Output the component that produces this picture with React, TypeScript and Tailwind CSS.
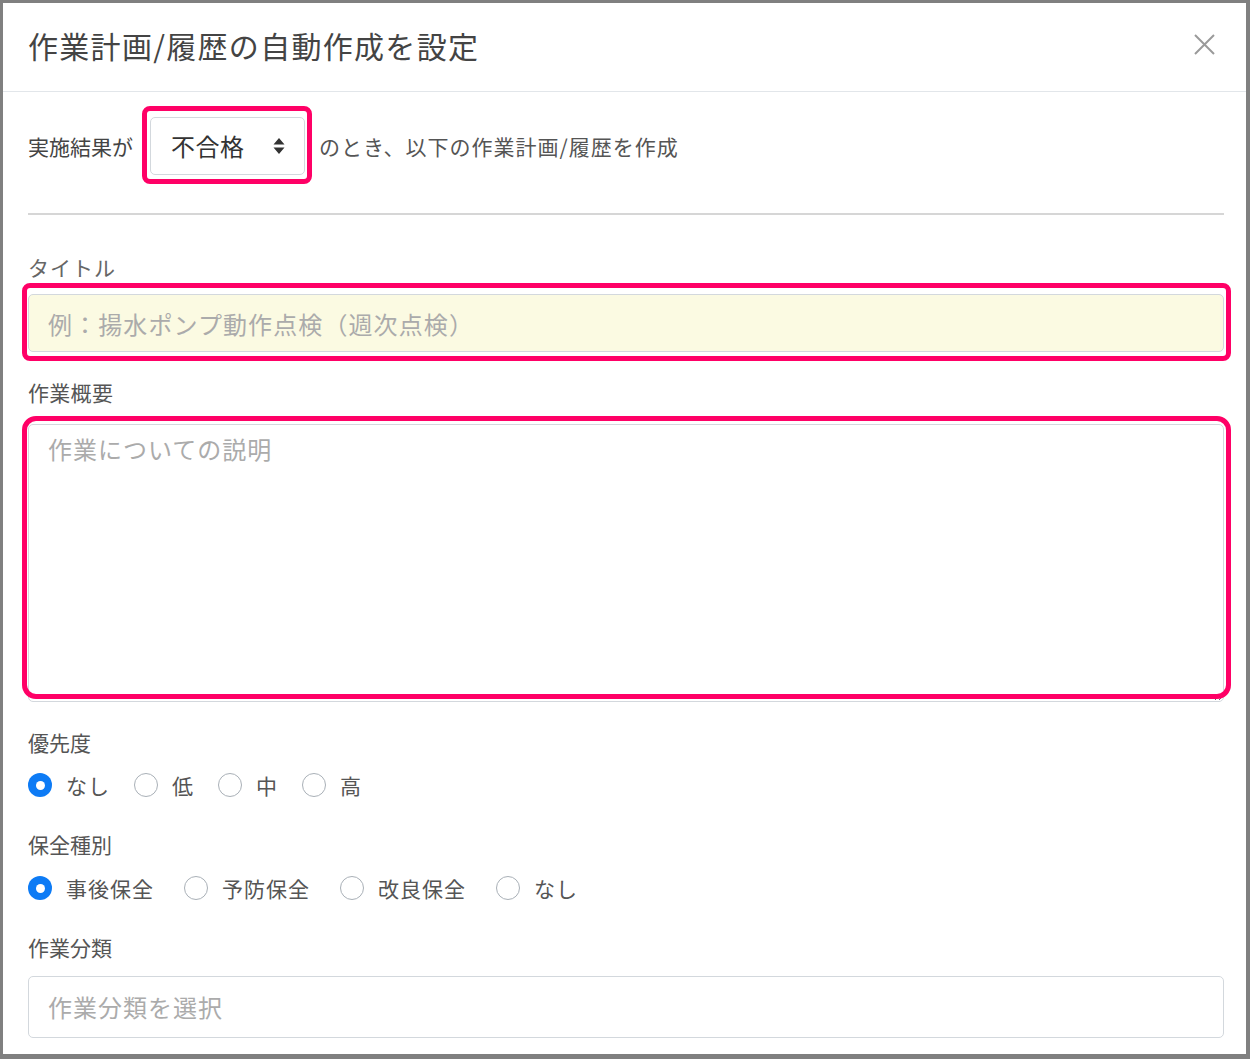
import React from "react";

const Radio = ({ checked }: { checked?: boolean }) =>
  checked ? (
    <span className="w-[24px] h-[24px] rounded-full bg-[#0d7bf5] flex items-center justify-center shrink-0">
      <span className="w-[9px] h-[9px] rounded-full bg-white" />
    </span>
  ) : (
    <span className="w-[24px] h-[24px] rounded-full border-[1.5px] border-[#a9b0b7] bg-white shrink-0" />
  );

const RadioItem = ({ label, checked, gap }: { label: string; checked?: boolean; gap: string }) => (
  <div className={"flex items-center " + gap}>
    <Radio checked={checked} />
    <span className="ml-[14px] text-[21px] leading-[30px] text-[#555] tracking-[1px]">{label}</span>
  </div>
);

const Pink = ({ cls }: { cls: string }) => (
  <div className={"absolute pointer-events-none border-[5px] border-[#ff0066] " + cls} />
);

export default function App() {
  return (
    <div
      className="w-[1250px] h-[1059px] bg-white border-[#808080] border-l-[3px] border-t-[3px] border-r-[4px] border-b-[5px] overflow-hidden"
      style={{ fontFamily: '"Noto Sans CJK JP", "Noto Sans", sans-serif' }}
    >
      <header className="h-[89px] border-b border-[#e2e6ea] flex items-center justify-between pl-[25px] pr-[31px] pb-[4px]">
        <h1 className="text-[30px] leading-[40px] text-[#444] tracking-[1.3px]">作業計画/履歴の自動作成を設定</h1>
        <svg width="21" height="21" viewBox="0 0 21 21" className="mt-[-2px]">
          <path d="M1 1 L20 20 M20 1 L1 20" stroke="#9a9a9a" strokeWidth="2" />
        </svg>
      </header>
      <div className="pl-[25px] pr-[22px]">
        <div className="flex items-center pt-[25px]">
          <span className="text-[21px] leading-[30px] text-[#444]">実施結果が</span>
          <div className="relative ml-[17px] w-[155px] h-[58px] border border-[#d3d8dd] rounded-[5px] flex items-center justify-between pl-[20px] pr-[19px]">
            <span className="text-[24px] text-[#333] tracking-[0.5px]">不合格</span>
            <svg width="12" height="16" viewBox="0 0 12 16">
              <path d="M6 0 L11.5 6.5 L0.5 6.5 Z M6 16 L11.5 9.5 L0.5 9.5 Z" fill="#333" />
            </svg>
            <Pink cls="left-[-9px] top-[-12px] right-[-8px] bottom-[-10px] rounded-[8px]" />
          </div>
          <span className="ml-[14px] text-[21px] leading-[30px] text-[#555] tracking-[1px]">のとき、以下の作業計画/履歴を作成</span>
        </div>
        <div className="mt-[38px] h-[2px] bg-[#d6d6d6]" />
        <div className="mt-[37px] text-[21px] leading-[30px] text-[#666] tracking-[1px]">タイトル</div>
        <div className="relative mt-[12px]">
          <input
            className="block w-full h-[58px] bg-[#fbfae2] border border-[#d3d8dd] rounded-[5px] pl-[19px] text-[24px] text-[#333] outline-none placeholder:text-[#ababab] tracking-[1.1px]"
            placeholder="例：揚水ポンプ動作点検（週次点検）"
          />
          <Pink cls="left-[-6px] top-[-11px] right-[-7px] bottom-[-9px] rounded-[8px]" />
        </div>
        <div className="mt-[25px] text-[21px] leading-[30px] text-[#555] tracking-[0.3px]">作業概要</div>
        <div className="relative mt-[17px]">
          <textarea
            className="block w-full h-[278px] border border-[#d3d8dd] rounded-[5px] pl-[19px] pt-[6px] text-[24px] text-[#333] outline-none placeholder:text-[#ababab] resize-y tracking-[1px]"
            placeholder="作業についての説明"
          />
          <Pink cls="left-[-6px] top-[-8px] right-[-7px] bottom-[3px] rounded-[14px]" />
        </div>
        <div className="mt-[25px] text-[21px] leading-[30px] text-[#555]">優先度</div>
        <div className="mt-[13px] flex items-center">
          <RadioItem label="なし" checked gap="mr-[24px]" />
          <RadioItem label="低" gap="mr-[24px]" />
          <RadioItem label="中" gap="mr-[24px]" />
          <RadioItem label="高" gap="mr-[24px]" />
        </div>
        <div className="mt-[29px] text-[21px] leading-[30px] text-[#555]">保全種別</div>
        <div className="mt-[14px] flex items-center">
          <RadioItem label="事後保全" checked gap="mr-[30px]" />
          <RadioItem label="予防保全" gap="mr-[30px]" />
          <RadioItem label="改良保全" gap="mr-[30px]" />
          <RadioItem label="なし" gap="mr-[30px]" />
        </div>
        <div className="mt-[29px] text-[21px] leading-[30px] text-[#555]">作業分類</div>
        <div className="mt-[14px] h-[62px] border border-[#d3d8dd] rounded-[5px] flex items-center pl-[19px]">
          <span className="text-[24px] text-[#ababab] tracking-[1px]">作業分類を選択</span>
        </div>
      </div>
    </div>
  );
}
